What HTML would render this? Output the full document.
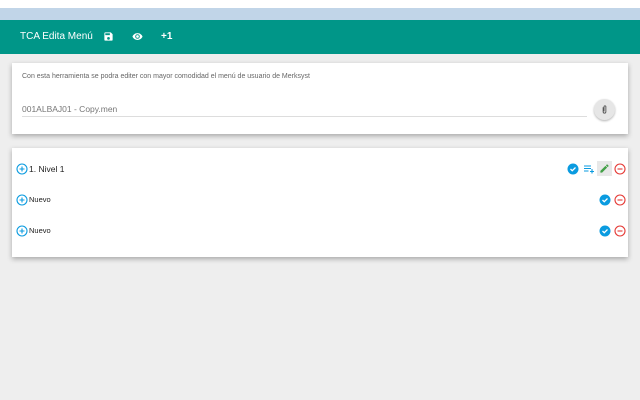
<!DOCTYPE html><html><head><style>
body{margin:0;width:640px;height:400px;background:#eeeeee;font-family:"Liberation Sans",sans-serif;position:relative;overflow:hidden}
.a{position:absolute}
.card{position:absolute;left:12px;width:616px;background:#fff;box-shadow:0 2px 5px rgba(0,0,0,.3)}
.t{font-size:8.5px;color:#222}
</style></head><body>
<div class="a" style="left:0;top:0;width:640px;height:8px;background:#fff"></div>
<div class="a" style="left:0;top:8px;width:640px;height:12px;background:#c1d5e8"></div>
<div class="a" style="left:0;top:20px;width:640px;height:34px;background:#009688"></div>
<div class="a" style="left:20px;top:31px;color:#fff;font-size:10px">TCA Edita Menú</div>
<svg class="a" style="left:103px;top:31px" width="11" height="11" viewBox="0 0 24 24"><path fill="#fff" d="M17 3H5a2 2 0 0 0-2 2v14a2 2 0 0 0 2 2h14a2 2 0 0 0 2-2V7l-4-4zm-5 16a3 3 0 1 1 0-6 3 3 0 0 1 0 6zm3-10H5V5h10v4z"/></svg>
<svg class="a" style="left:131px;top:31px" width="13" height="11" viewBox="0 0 24 24"><path fill="#fff" d="M12 4.5C7 4.5 2.7 7.6 1 12c1.7 4.4 6 7.5 11 7.5s9.3-3.1 11-7.5c-1.7-4.4-6-7.5-11-7.5zM12 17a5 5 0 1 1 0-10 5 5 0 0 1 0 10zm0-8a3 3 0 1 0 0 6 3 3 0 0 0 0-6z"/></svg>
<div class="a" style="left:161px;top:31px;color:#fff;font-size:10px;font-weight:bold">+1</div>
<div class="card" style="top:63px;height:71px">
<div class="a" style="left:10px;top:10px;font-size:7px;color:#666">Con esta herramienta se podra editer con mayor comodidad el menú de usuario de Merksyst</div>
<div class="a" style="left:10px;top:41px;font-size:8.5px;color:#777">001ALBAJ01 - Copy.men</div>
<div class="a" style="left:10px;top:53px;width:565px;height:1px;background:#ddd"></div>
<div class="a" style="left:582px;top:36px;width:21px;height:21px;border-radius:50%;background:#e6e6e6;box-shadow:0 1px 2px rgba(0,0,0,.3)"></div>
<svg class="a" style="left:587px;top:41px" width="11" height="11" viewBox="0 0 24 24"><path fill="none" stroke="#555" stroke-width="2" d="M9 7v10a3 3 0 0 0 6 0V6a2 2 0 0 0-4 0v10"/></svg>
</div>
<div class="card" style="top:148px;height:109px">
<svg class="a" style="left:4px;top:15px" width="12" height="12" viewBox="0 0 24 24"><circle cx="12" cy="12" r="10" fill="none" stroke="#0a9be0" stroke-width="2.2"/><path d="M12 7v10M7 12h10" stroke="#0a9be0" stroke-width="2.2"/></svg>
<div class="a t" style="left:17px;top:16px">1. Nivel 1</div>
<svg class="a" style="left:4px;top:46px" width="12" height="12" viewBox="0 0 24 24"><circle cx="12" cy="12" r="10" fill="none" stroke="#0a9be0" stroke-width="2.2"/><path d="M12 7v10M7 12h10" stroke="#0a9be0" stroke-width="2.2"/></svg>
<div class="a t" style="left:17px;top:47px;font-size:7.5px">Nuevo</div>
<svg class="a" style="left:4px;top:77px" width="12" height="12" viewBox="0 0 24 24"><circle cx="12" cy="12" r="10" fill="none" stroke="#0a9be0" stroke-width="2.2"/><path d="M12 7v10M7 12h10" stroke="#0a9be0" stroke-width="2.2"/></svg>
<div class="a t" style="left:17px;top:78px;font-size:7.5px">Nuevo</div>
<svg class="a" style="left:555px;top:15px" width="12" height="12" viewBox="0 0 24 24"><circle cx="12" cy="12" r="11" fill="#0a9be0"/><path d="M7 12l3.5 3.5L17 9" fill="none" stroke="#fff" stroke-width="2.5"/></svg>
<svg class="a" style="left:571px;top:15px" width="12" height="12" viewBox="0 0 24 24"><path d="M2 6h14M2 11h14M2 16h9M18 12v9M14 17h8" stroke="#0a9be0" stroke-width="2.2"/></svg>
<div class="a" style="left:585px;top:13px;width:15px;height:15px;background:#e8e8e8"></div>
<svg class="a" style="left:587px;top:15px" width="11" height="11" viewBox="0 0 24 24"><path fill="#43a047" d="M3 17.25V21h3.75L17.8 9.94l-3.75-3.75L3 17.25zM20.7 7.04a1 1 0 0 0 0-1.41l-2.34-2.34a1 1 0 0 0-1.41 0l-1.83 1.83 3.75 3.75 1.83-1.83z"/></svg>
<svg class="a" style="left:602px;top:15px" width="12" height="12" viewBox="0 0 24 24"><circle cx="12" cy="12" r="10" fill="none" stroke="#e53935" stroke-width="2.2"/><path d="M7 12h10" stroke="#e53935" stroke-width="2.2"/></svg>
<svg class="a" style="left:587px;top:46px" width="12" height="12" viewBox="0 0 24 24"><circle cx="12" cy="12" r="11" fill="#0a9be0"/><path d="M7 12l3.5 3.5L17 9" fill="none" stroke="#fff" stroke-width="2.5"/></svg>
<svg class="a" style="left:602px;top:46px" width="12" height="12" viewBox="0 0 24 24"><circle cx="12" cy="12" r="10" fill="none" stroke="#e53935" stroke-width="2.2"/><path d="M7 12h10" stroke="#e53935" stroke-width="2.2"/></svg>
<svg class="a" style="left:587px;top:77px" width="12" height="12" viewBox="0 0 24 24"><circle cx="12" cy="12" r="11" fill="#0a9be0"/><path d="M7 12l3.5 3.5L17 9" fill="none" stroke="#fff" stroke-width="2.5"/></svg>
<svg class="a" style="left:602px;top:77px" width="12" height="12" viewBox="0 0 24 24"><circle cx="12" cy="12" r="10" fill="none" stroke="#e53935" stroke-width="2.2"/><path d="M7 12h10" stroke="#e53935" stroke-width="2.2"/></svg>
</div>
</body></html>
